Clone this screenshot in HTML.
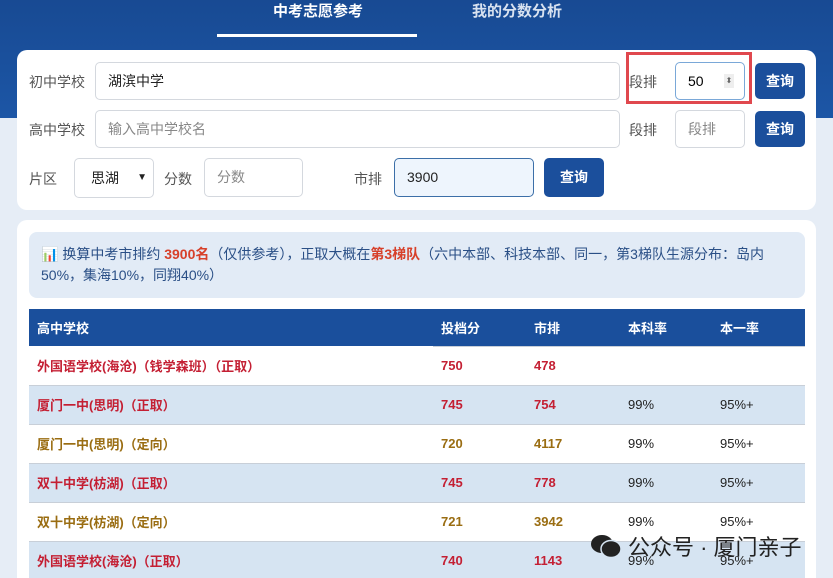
<!DOCTYPE html>
<html><head><meta charset="utf-8"><style>
*{box-sizing:border-box;margin:0;padding:0}
html{width:833px;height:578px;overflow:hidden}
body{width:833px;height:578px;overflow:hidden;position:relative;background:#e6edf6;font-family:"Liberation Sans","Noto Sans CJK SC",sans-serif}
.hdr{position:absolute;left:0;top:0;width:833px;height:118px;background:linear-gradient(180deg,#184a93,#1c56a6)}
.tab{position:absolute;top:0px;font-size:15px;font-weight:bold;color:#fff}
.ul{position:absolute;left:217px;top:34px;width:200px;height:3px;background:#fff}
.card{position:absolute;left:17px;width:799px;background:#fff;border-radius:10px}
.lb{position:absolute;font-size:14px;color:#555}
.in{position:absolute;height:38px;border:1px solid #d4d8de;border-radius:5px;font-size:14px;padding:0 12px;line-height:36px;color:#222;background:#fff}
.ph{color:#888}
.btn{position:absolute;background:#1b4f9c;color:#fff;font-size:14px;font-weight:bold;border-radius:5px;text-align:center}
.info{position:absolute;left:12px;top:12px;width:776px;height:66px;background:#e2ebf6;border-radius:8px;padding:12px 12px;font-size:14px;line-height:21px;color:#2a4f86}
.info b{color:#d7402a}
table{position:absolute;left:12px;top:89px;width:776px;border-collapse:collapse;font-size:13px}
th{background:#1a4f9c;color:#fff;height:37px;text-align:left;padding-left:8px;font-weight:bold}
td{height:39px;padding-left:8px;border-top:1px solid #c8cfd8;font-weight:bold}
tr.b td{background:#d6e4f2}
.r{color:#c41f33}.g{color:#9a6d12}
td.n{font-weight:normal;color:#222}
.wm{position:absolute;left:590px;top:530px;font-size:22px;color:#222;display:flex;align-items:center;gap:6px}
</style></head><body>
<div class="hdr"></div>
<div class="tab" style="left:273px">中考志愿参考</div>
<div class="tab" style="left:472px;color:#d8e2f0">我的分数分析</div>
<div class="ul"></div>
<div class="card" style="top:50px;height:160px">
<div class="lb" style="left:12px;top:22px">初中学校</div>
<div class="in" style="left:78px;top:12px;width:525px">湖滨中学</div>
<div class="lb" style="left:612px;top:22px">段排</div>
<div class="in" style="left:658px;top:12px;width:70px;border-color:#7aa8d8;color:#000">50<span style="position:absolute;right:10px;top:11px;width:10px;height:14px;background:#eee;font-size:8px;line-height:14px;text-align:center;color:#666">⬍</span></div>
<div style="position:absolute;left:609px;top:2px;width:126px;height:52px;border:3px solid #e0484e"></div>
<div class="btn" style="left:738px;top:13px;width:50px;height:36px;line-height:36px">查询</div>
<div class="lb" style="left:12px;top:70px">高中学校</div>
<div class="in ph" style="left:78px;top:60px;width:525px">输入高中学校名</div>
<div class="lb" style="left:612px;top:70px">段排</div>
<div class="in ph" style="left:658px;top:60px;width:70px">段排</div>
<div class="btn" style="left:738px;top:61px;width:50px;height:36px;line-height:36px">查询</div>
<div class="lb" style="left:12px;top:119px">片区</div>
<div class="in" style="left:57px;top:108px;width:80px;height:40px;line-height:38px;padding-left:16px">思湖<span style="position:absolute;right:6px;font-size:10px">▼</span></div>
<div class="lb" style="left:147px;top:119px">分数</div>
<div class="in ph" style="left:187px;top:108px;width:99px;height:39px">分数</div>
<div class="lb" style="left:337px;top:119px">市排</div>
<div class="in" style="left:377px;top:108px;width:140px;height:39px;background:#eef5fd;border-color:#3c6fa8">3900</div>
<div class="btn" style="left:527px;top:108px;width:60px;height:39px;line-height:39px">查询</div>
</div>
<div class="card" style="top:220px;height:358px;border-radius:10px 10px 0 0">
<div class="info">📊 换算中考市排约 <b>3900名</b>（仅供参考），正取大概在<b>第3梯队</b>（六中本部、科技本部、同一，第3梯队生源分布：岛内50%，集海10%，同翔40%）</div>
<table>
<tr><th style="width:404px">高中学校</th><th style="width:93px">投档分</th><th style="width:94px">市排</th><th style="width:92px">本科率</th><th>本一率</th></tr>
<tr><td class="r" style="border-top:none">外国语学校(海沧)（钱学森班）（正取）</td><td class="r">750</td><td class="r">478</td><td class="n"></td><td class="n"></td></tr>
<tr class="b"><td class="r">厦门一中(思明)（正取）</td><td class="r">745</td><td class="r">754</td><td class="n">99%</td><td class="n">95%+</td></tr>
<tr><td class="g">厦门一中(思明)（定向）</td><td class="g">720</td><td class="g">4117</td><td class="n">99%</td><td class="n">95%+</td></tr>
<tr class="b"><td class="r">双十中学(枋湖)（正取）</td><td class="r">745</td><td class="r">778</td><td class="n">99%</td><td class="n">95%+</td></tr>
<tr><td class="g">双十中学(枋湖)（定向）</td><td class="g">721</td><td class="g">3942</td><td class="n">99%</td><td class="n">95%+</td></tr>
<tr class="b"><td class="r">外国语学校(海沧)（正取）</td><td class="r">740</td><td class="r">1143</td><td class="n">99%</td><td class="n">95%+</td></tr>
</table>
</div>
<div class="wm"><svg width="32" height="26" viewBox="0 0 32 26"><ellipse cx="12" cy="11" rx="11" ry="9" fill="#222"/><ellipse cx="21" cy="16" rx="10" ry="8.5" fill="#222" stroke="#d6e4f2" stroke-width="1.5"/></svg>公众号 · 厦门亲子</div>
</body></html>
